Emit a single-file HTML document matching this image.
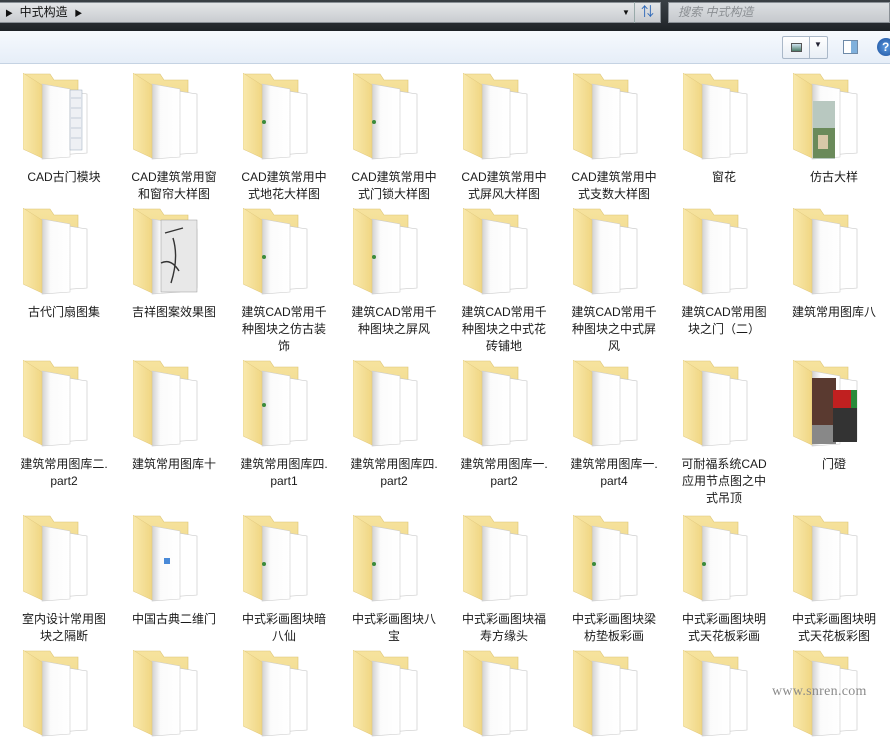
<!DOCTYPE html>
<html><head><meta charset="utf-8">
<style>
*{margin:0;padding:0;box-sizing:border-box}
body{width:890px;height:705px;overflow:hidden;background:#fff;font-family:"Liberation Sans","Noto Sans CJK SC",sans-serif;position:relative}
#top{position:absolute;left:0;top:0;width:890px;height:31px;background:linear-gradient(#3a4045,#2b3035 60%,#1e2226)}
#addr{position:absolute;left:0;top:2px;width:661px;height:21px;background:linear-gradient(#e4e6e8,#c9ccd0);border:1px solid #8a9096;border-left:none;font-size:12px;color:#111;line-height:19px}
#search{position:absolute;left:668px;top:2px;width:222px;height:21px;background:linear-gradient(#dcdfe2,#c6c9cd);border:1px solid #8a9096;font-size:12px;color:#8a8e92;font-style:italic;line-height:19px;padding-left:9px}
#tb{position:absolute;left:0;top:31px;width:890px;height:33px;background:linear-gradient(#f6f9fd,#e6eef8);border-bottom:1px solid #c5d3e3}
.item{position:absolute;width:110px}
.item svg{position:absolute;left:0;top:0}
.lab{position:absolute;left:-16px;width:114px;text-align:center;font-size:12px;line-height:17px;color:#1a1a1a}
#wm{position:absolute;left:772px;top:684px;font-family:"Liberation Serif",serif;font-size:14px;color:#8a8a8a;letter-spacing:.3px}
</style></head><body>
<svg width="0" height="0" style="position:absolute">
<defs>
<linearGradient id="fl" x1="0" y1="0" x2="1" y2="0"><stop offset="0" stop-color="#f9e9ad"/><stop offset="1" stop-color="#f0d683"/></linearGradient>
<linearGradient id="bk" x1="0" y1="0" x2="0" y2="1"><stop offset="0" stop-color="#f6e39e"/><stop offset="1" stop-color="#edd07a"/></linearGradient>
<linearGradient id="pp" x1="0" y1="0" x2="1" y2="0"><stop offset="0" stop-color="#d0d0d0"/><stop offset=".3" stop-color="#fbfbfb"/><stop offset="1" stop-color="#fff"/></linearGradient>
<symbol id="f" viewBox="0 0 70 90">
<polygon points="2,1 27,1 31,7 55,7 55,77 2,77" fill="url(#bk)" stroke="#dcc374" stroke-width=".6"/>
<polygon points="19,14 64,21 64,80 19,83" fill="#fff" stroke="#c4c4c4" stroke-width=".6"/>
<polygon points="19,11 47,16 47,84 19,86" fill="url(#pp)" stroke="#cccccc" stroke-width=".6"/>
<polygon points="0,0 19,12 19,85 0,76" fill="url(#fl)" stroke="#e0c77c" stroke-width=".5"/>
</symbol>
</defs></svg>

<div id="top">
<div id="addr"><span style="font-size:8px;margin-left:5px">&#9654;</span>&nbsp;&nbsp;中式构造&nbsp;&nbsp;<span style="font-size:8px">&#9654;</span>
<span style="position:absolute;left:622px;top:0;font-size:8px">&#9660;</span>
<span style="position:absolute;left:634px;top:-1px;width:26px;height:21px;border-left:1px solid #9aa;color:#2a66b8;font-size:13px;text-align:center">&#8645;</span></div>
<div id="search">搜索 中式构造</div>
</div>
<div id="tb">
<div style="position:absolute;left:782px;top:5px;width:46px;height:23px;border:1px solid #aab8c8;border-radius:2px;background:linear-gradient(#fff,#e8eef5)">
<div style="position:absolute;left:8px;top:6px;width:11px;height:9px;border:1px solid #555;background:linear-gradient(#cfe3f0,#4a7a66)"></div>
<div style="position:absolute;left:26px;top:-1px;width:1px;height:23px;background:#aab8c8"></div>
<div style="position:absolute;left:31px;top:3px;font-size:8px;color:#223">&#9660;</div></div>
<div style="position:absolute;left:843px;top:9px;width:15px;height:14px;border:1px solid #6e8aa8;background:#fff"><div style="position:absolute;right:0;top:0;width:6px;height:12px;background:#7fb0dc"></div></div>
<div style="position:absolute;left:877px;top:7px;width:18px;height:18px;border-radius:50%;background:radial-gradient(#5a9ae0,#1c4f9c);color:#fff;font-size:12px;font-weight:bold;line-height:18px;padding-left:5px">?</div>
</div>

<div class="item" style="left:23px;top:73px"><svg width="70" height="90"><use href="#f"/><g stroke="#9ab" stroke-width=".5"><rect x="47" y="17" width="12" height="60" fill="#eef0f4"/><line x1="48" y1="25" x2="58" y2="25"/><line x1="48" y1="35" x2="58" y2="35"/><line x1="48" y1="45" x2="58" y2="45"/><line x1="48" y1="55" x2="58" y2="55"/><line x1="48" y1="65" x2="58" y2="65"/></g></svg><div class="lab" style="top:96px">CAD古门模块</div></div>
<div class="item" style="left:133px;top:73px"><svg width="70" height="90"><use href="#f"/></svg><div class="lab" style="top:96px">CAD建筑常用窗<br>和窗帘大样图</div></div>
<div class="item" style="left:243px;top:73px"><svg width="70" height="90"><use href="#f"/><circle cx="21" cy="49" r="2" fill="#3a8a3a"/></svg><div class="lab" style="top:96px">CAD建筑常用中<br>式地花大样图</div></div>
<div class="item" style="left:353px;top:73px"><svg width="70" height="90"><use href="#f"/><circle cx="21" cy="49" r="2" fill="#3a8a3a"/></svg><div class="lab" style="top:96px">CAD建筑常用中<br>式门锁大样图</div></div>
<div class="item" style="left:463px;top:73px"><svg width="70" height="90"><use href="#f"/></svg><div class="lab" style="top:96px">CAD建筑常用中<br>式屏风大样图</div></div>
<div class="item" style="left:573px;top:73px"><svg width="70" height="90"><use href="#f"/></svg><div class="lab" style="top:96px">CAD建筑常用中<br>式支数大样图</div></div>
<div class="item" style="left:683px;top:73px"><svg width="70" height="90"><use href="#f"/></svg><div class="lab" style="top:96px">窗花</div></div>
<div class="item" style="left:793px;top:73px"><svg width="70" height="90"><use href="#f"/><rect x="20" y="28" width="22" height="58" fill="#b8c8c0"/><rect x="20" y="55" width="22" height="30" fill="#6a8a5a"/><rect x="25" y="62" width="10" height="14" fill="#d8c8a8"/></svg><div class="lab" style="top:96px">仿古大样</div></div>

<div class="item" style="left:23px;top:208px"><svg width="70" height="90"><use href="#f"/></svg><div class="lab" style="top:96px">古代门扇图集</div></div>
<div class="item" style="left:133px;top:208px"><svg width="70" height="90"><use href="#f"/><rect x="28" y="12" width="36" height="72" fill="#e8e8e8" stroke="#999" stroke-width=".5"/><path d="M32 25l18 -5 M40 30 q6 20 -2 45 M28 55 q10 -5 18 8" stroke="#333" stroke-width="1.4" fill="none"/></svg><div class="lab" style="top:96px">吉祥图案效果图</div></div>
<div class="item" style="left:243px;top:208px"><svg width="70" height="90"><use href="#f"/><circle cx="21" cy="49" r="2" fill="#3a8a3a"/></svg><div class="lab" style="top:96px">建筑CAD常用千<br>种图块之仿古装<br>饰</div></div>
<div class="item" style="left:353px;top:208px"><svg width="70" height="90"><use href="#f"/><circle cx="21" cy="49" r="2" fill="#3a8a3a"/></svg><div class="lab" style="top:96px">建筑CAD常用千<br>种图块之屏风</div></div>
<div class="item" style="left:463px;top:208px"><svg width="70" height="90"><use href="#f"/></svg><div class="lab" style="top:96px">建筑CAD常用千<br>种图块之中式花<br>砖铺地</div></div>
<div class="item" style="left:573px;top:208px"><svg width="70" height="90"><use href="#f"/></svg><div class="lab" style="top:96px">建筑CAD常用千<br>种图块之中式屏<br>风</div></div>
<div class="item" style="left:683px;top:208px"><svg width="70" height="90"><use href="#f"/></svg><div class="lab" style="top:96px">建筑CAD常用图<br>块之门（二）</div></div>
<div class="item" style="left:793px;top:208px"><svg width="70" height="90"><use href="#f"/></svg><div class="lab" style="top:96px">建筑常用图库八</div></div>

<div class="item" style="left:23px;top:360px"><svg width="70" height="90"><use href="#f"/></svg><div class="lab" style="top:96px">建筑常用图库二.<br>part2</div></div>
<div class="item" style="left:133px;top:360px"><svg width="70" height="90"><use href="#f"/></svg><div class="lab" style="top:96px">建筑常用图库十</div></div>
<div class="item" style="left:243px;top:360px"><svg width="70" height="90"><use href="#f"/><circle cx="21" cy="45" r="2" fill="#3a8a3a"/></svg><div class="lab" style="top:96px">建筑常用图库四.<br>part1</div></div>
<div class="item" style="left:353px;top:360px"><svg width="70" height="90"><use href="#f"/></svg><div class="lab" style="top:96px">建筑常用图库四.<br>part2</div></div>
<div class="item" style="left:463px;top:360px"><svg width="70" height="90"><use href="#f"/></svg><div class="lab" style="top:96px">建筑常用图库一.<br>part2</div></div>
<div class="item" style="left:573px;top:360px"><svg width="70" height="90"><use href="#f"/></svg><div class="lab" style="top:96px">建筑常用图库一.<br>part4</div></div>
<div class="item" style="left:683px;top:360px"><svg width="70" height="90"><use href="#f"/></svg><div class="lab" style="top:96px">可耐福系统CAD<br>应用节点图之中<br>式吊顶</div></div>
<div class="item" style="left:793px;top:360px"><svg width="70" height="90"><use href="#f"/><rect x="19" y="18" width="24" height="66" fill="#5a3a30"/><rect x="19" y="65" width="24" height="19" fill="#888"/><rect x="40" y="30" width="24" height="52" fill="#333"/><rect x="40" y="30" width="24" height="18" fill="#c02020"/><rect x="58" y="30" width="6" height="18" fill="#2a8a3a"/></svg><div class="lab" style="top:96px">门磴</div></div>

<div class="item" style="left:23px;top:515px"><svg width="70" height="90"><use href="#f"/></svg><div class="lab" style="top:96px">室内设计常用图<br>块之隔断</div></div>
<div class="item" style="left:133px;top:515px"><svg width="70" height="90"><use href="#f"/><rect x="31" y="43" width="6" height="6" fill="#4a8ad8"/></svg><div class="lab" style="top:96px">中国古典二维门</div></div>
<div class="item" style="left:243px;top:515px"><svg width="70" height="90"><use href="#f"/><circle cx="21" cy="49" r="2" fill="#3a8a3a"/></svg><div class="lab" style="top:96px">中式彩画图块暗<br>八仙</div></div>
<div class="item" style="left:353px;top:515px"><svg width="70" height="90"><use href="#f"/><circle cx="21" cy="49" r="2" fill="#3a8a3a"/></svg><div class="lab" style="top:96px">中式彩画图块八<br>宝</div></div>
<div class="item" style="left:463px;top:515px"><svg width="70" height="90"><use href="#f"/></svg><div class="lab" style="top:96px">中式彩画图块福<br>寿方缘头</div></div>
<div class="item" style="left:573px;top:515px"><svg width="70" height="90"><use href="#f"/><circle cx="21" cy="49" r="2" fill="#3a8a3a"/></svg><div class="lab" style="top:96px">中式彩画图块梁<br>枋垫板彩画</div></div>
<div class="item" style="left:683px;top:515px"><svg width="70" height="90"><use href="#f"/><circle cx="21" cy="49" r="2" fill="#3a8a3a"/></svg><div class="lab" style="top:96px">中式彩画图块明<br>式天花板彩画</div></div>
<div class="item" style="left:793px;top:515px"><svg width="70" height="90"><use href="#f"/></svg><div class="lab" style="top:96px">中式彩画图块明<br>式天花板彩图</div></div>

<div class="item" style="left:23px;top:650px"><svg width="70" height="90"><use href="#f"/></svg></div>
<div class="item" style="left:133px;top:650px"><svg width="70" height="90"><use href="#f"/></svg></div>
<div class="item" style="left:243px;top:650px"><svg width="70" height="90"><use href="#f"/></svg></div>
<div class="item" style="left:353px;top:650px"><svg width="70" height="90"><use href="#f"/></svg></div>
<div class="item" style="left:463px;top:650px"><svg width="70" height="90"><use href="#f"/></svg></div>
<div class="item" style="left:573px;top:650px"><svg width="70" height="90"><use href="#f"/></svg></div>
<div class="item" style="left:683px;top:650px"><svg width="70" height="90"><use href="#f"/></svg></div>
<div class="item" style="left:793px;top:650px"><svg width="70" height="90"><use href="#f"/></svg></div>

<div id="wm">www.snren.com</div>
</body></html>
